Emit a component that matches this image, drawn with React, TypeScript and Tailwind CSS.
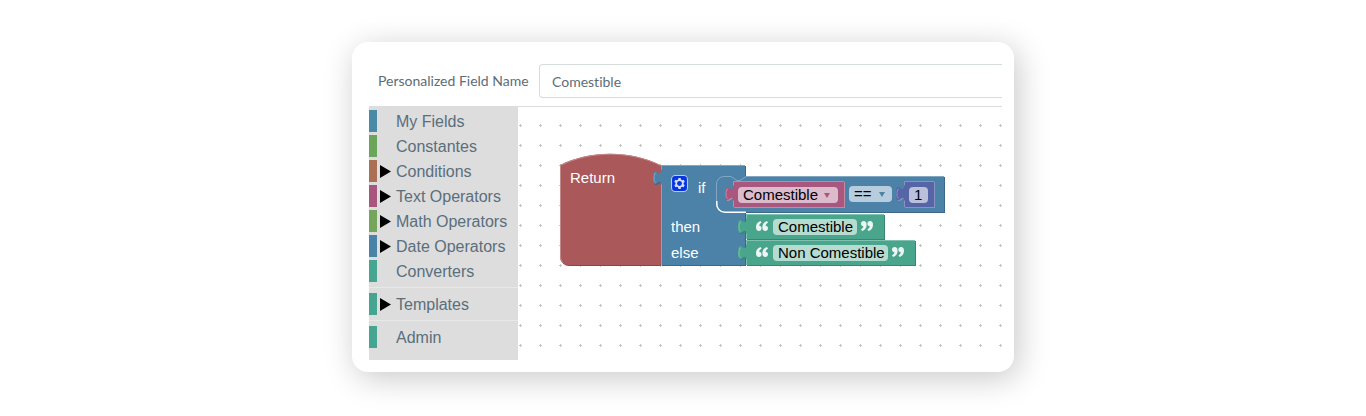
import clsx from "clsx";

const categories = [
  { name: "My Fields", color: "bg-[#498ba6]" },
  { name: "Constantes", color: "bg-[#6ba55b]" },
  { name: "Conditions", color: "bg-[#aa7056]", nested: true },
  { name: "Text Operators", color: "bg-[#a9567f]", nested: true },
  { name: "Math Operators", color: "bg-[#74a55b]", nested: true },
  { name: "Date Operators", color: "bg-[#4b82a8]", nested: true },
  { name: "Converters", color: "bg-[#45a591]" },
  { name: "Templates", color: "bg-[#45a591]", nested: true, separated: true },
  { name: "Admin", color: "bg-[#45a591]", separated: true },
];

const GEAR =
  "m4.203,7.296 0,1.368 -0.92,0.677 -0.11,0.41 0.9,1.559 0.41,0.11 1.043,-0.457 1.187,0.683 0.127,1.134 0.3,0.3 1.8,0 0.3,-0.299 0.127,-1.138 1.185,-0.682 1.046,0.458 0.409,-0.11 0.9,-1.559 -0.11,-0.41 -0.92,-0.677 0,-1.366 0.92,-0.677 0.11,-0.41 -0.9,-1.559 -0.409,-0.109 -1.046,0.458 -1.185,-0.682 -0.127,-1.138 -0.3,-0.299 -1.8,0 -0.3,0.3 -0.126,1.135 -1.187,0.682 -1.043,-0.457 -0.41,0.11 -0.899,1.559 0.108,0.409z";

const QUOTE =
  "M4.600 0C1.600 .8 0 3.200 0 6.300C0 8.700 1.100 10 2.900 10C4.500 10 5.600 8.900 5.600 7.300C5.600 5.800 4.600 4.800 3.200 4.700C3.300 3.300 4.200 2.200 5.600 1.700Z";

const Quote = ({ x, y, closing }: { x: number; y: number; closing?: boolean }) => (
  <g
    fill="#fff"
    fillOpacity=".9"
    transform={closing ? `translate(${x + 12} ${y + 10}) rotate(180)` : `translate(${x} ${y})`}
  >
    <path d={QUOTE} />
    <path d={QUOTE} transform="translate(6.400 0)" />
  </g>
);

type ValueBlockProps = {
  x: number;
  y: number;
  width: number;
  height: number;
  fill: string;
  light: string;
  dark: string;
};

// Block with a puzzle tab on its left side
const ValueBlock = ({ x, y, width, height, fill, light, dark }: ValueBlockProps) => (
  <g transform={`translate(${x} ${y})`}>
    <path
      fill={dark}
      transform="translate(1 1)"
      d={`M0 0H${width}V${height}H0V20c0,-10 -8,8 -8,-7.500s8,2.500 8,-7.500z`}
    />
    <path fill={fill} d={`M0 0H${width}V${height}H0V20c0,-10 -8,8 -8,-7.500s8,2.500 8,-7.500z`} />
    <path
      fill="none"
      stroke={light}
      d={`M${width} .5H.5V4.500M.5 ${height}V19.500M-5.500 17.500q-2,-1 -1.500,-6q.3,-4 2,-3.500`}
    />
  </g>
);

const Blocks = () => (
  <svg className="absolute inset-0 h-full w-full" fontFamily="'Liberation Sans', Arial, sans-serif" fontSize="15">
    <defs>
      <pattern id="dots" y="10" width="20" height="20" patternUnits="userSpaceOnUse">
        <path d="M1 9.500h3M2.500 8v3" stroke="#c4c4c4" />
      </pattern>
    </defs>
    <rect width="100%" height="100%" fill="url(#dots)" />

    <g transform="translate(42 59)">
      <path fill="#884648" d="M1 1c30,-15 70,-15 100,0V101H9a8,8 0 0,1 -8,-8z" />
      <path fill="#ab585a" d="M0 0c30,-15 70,-15 100,0h1V100H8a8,8 0 0,1 -8,-8z" />
      <path fill="none" stroke="#c48a8b" d="M2.500 97.500Q.5 95 .5 92V.5c30,-15 70,-15 100,0" />
    </g>

    <ValueBlock x={143} y={59} width={84} height={100} fill="#4c81a8" light="#82a7c2" dark="#3d6786" />

    <g transform="translate(198 70)">
      <path fill="#3d6786" d="M29 1H229V37H29z" />
      <path fill="#4c81a8" d="M0 8a8,8 0 0,1 8,-8h7l6,4 3,0 6,-4H228V36H8a8,8 0 0,1 -8,-8z" />
      <path fill="none" stroke="#82a7c2" d="M.5 29V8a7.500,7.500 0 0,1 7.500,-7.500h7l6,4 3,0 6,-4H228" />
      <path fill="none" stroke="#fff" strokeWidth="1.500" d="M.8 25V28a8,8 0 0,0 8,8.300H30" />
    </g>

    <ValueBlock x={215} y={75} width={111} height={26} fill="#a9577f" light="#c389a4" dark="#c389a4" />
    <ValueBlock x={386} y={75} width={30} height={26} fill="#5565a6" light="#8893c1" dark="#8893c1" />
    <ValueBlock x={228} y={108} width={138} height={25} fill="#49a58c" light="#80c0af" dark="#3a8470" />
    <ValueBlock x={228} y={134} width={169} height={25} fill="#49a58c" light="#80c0af" dark="#3a8470" />

    <g fill="#fff">
      <text x="52" y="77">Return</text>
      <text x="180" y="87">if</text>
      <text x="153" y="126">then</text>
      <text x="153" y="152">else</text>
    </g>

    <Quote x={238} y={115} />
    <Quote x={343} y={115} closing />
    <Quote x={238} y={141} />
    <Quote x={374} y={141} closing />
  </svg>
);

const field =
  "absolute h-4 appearance-none rounded bg-white/60 p-0 text-[15px] leading-4 text-black outline-none";

const Workspace = () => (
  <div className="relative flex-1 overflow-hidden border-t border-[#dddddd] font-['Liberation_Sans',Arial,sans-serif]">
    <div className="absolute inset-x-0 -top-px bottom-0">
      <Blocks />
      <button aria-label="Edit block" className="absolute top-[69px] left-[153px] size-[17px]">
        <svg viewBox="0 0 16 16" className="block size-full">
          <rect x=".5" y=".5" width="15" height="15" rx="3.500" fill="#0435e0" stroke="#b9cdea" />
          <path d={GEAR} fill="#d5def8" />
          <circle cx="8" cy="8" r="2.300" fill="#0435e0" />
        </svg>
      </button>
      <select aria-label="Variable" className={clsx(field, "top-[81px] left-[220px] w-[100px] pl-[5px]")}>
        <option>Comestible</option>
      </select>
      <select aria-label="Comparison" className={clsx(field, "top-[80px] left-[331px] w-[43px] pl-[5px]")}>
        <option>==</option>
      </select>
      <svg className="pointer-events-none absolute top-[87px] left-[306px] h-[5px] w-[6px]" viewBox="0 0 6 5">
        <path d="M0 0h6L3 5z" fill="#a9577f" />
      </svg>
      <svg className="pointer-events-none absolute top-[86px] left-[361px] h-[5px] w-[6px]" viewBox="0 0 6 5">
        <path d="M0 0h6L3 5z" fill="#4c81a8" />
      </svg>
      <input aria-label="Number" defaultValue="1" className={clsx(field, "top-[81px] left-[391px] w-[19px] pl-[5px]")} />
      <input
        aria-label="Then text"
        defaultValue="Comestible"
        className={clsx(field, "top-[113px] left-[255px] w-[84px] pl-[5px]")}
      />
      <input
        aria-label="Else text"
        defaultValue="Non Comestible"
        className={clsx(field, "top-[139px] left-[255px] w-[115px] pl-[5px]")}
      />
    </div>
  </div>
);

const Toolbox = () => (
  <nav className="w-[149px] shrink-0 bg-[#dddddd] pt-1 pb-[9px] font-['Liberation_Sans',Arial,sans-serif] text-base text-[#5a6e7b]">
    {categories.map(({ name, color, nested, separated }) => (
      <div key={name}>
        {separated && <div className="mt-[5px] mb-[5px] border-t border-[#e8e8e8]" />}
        <button className="mb-[3px] flex h-[22px] w-full items-center text-left">
          <span className={clsx("h-full w-2", color)} />
          <span className="flex w-[19px] pl-[3px]">
            {nested && (
              <svg viewBox="0 0 11 13" className="h-[13px] w-[11px]">
                <path d="M0 0L11 6.500L0 13z" />
              </svg>
            )}
          </span>
          <span className="pt-0.5 leading-5 whitespace-nowrap">{name}</span>
        </button>
      </div>
    ))}
  </nav>
);

const App = () => (
  <main className="bg-white pt-[42px] pb-11">
    <div className="mx-auto max-w-[662px] rounded-2xl bg-white pt-[22px] pr-3 pb-3 pl-[17px] shadow-[4px_6px_32px_rgba(0,0,0,0.22)]">
      <div className="flex items-center font-['Lato',sans-serif] text-sm text-[#5d6d76] [font-variant-ligatures:none]">
        <label htmlFor="field-name" className="w-[170px] shrink-0 pl-[9px]">
          Personalized Field Name
        </label>
        <input
          id="field-name"
          defaultValue="Comestible"
          className="h-[34px] min-w-0 flex-1 rounded-l-sm border border-r-0 border-[#d5dddb] px-3 outline-none"
        />
      </div>
      <div className="mt-2 flex">
        <Toolbox />
        <Workspace />
      </div>
    </div>
  </main>
);

export default App;
